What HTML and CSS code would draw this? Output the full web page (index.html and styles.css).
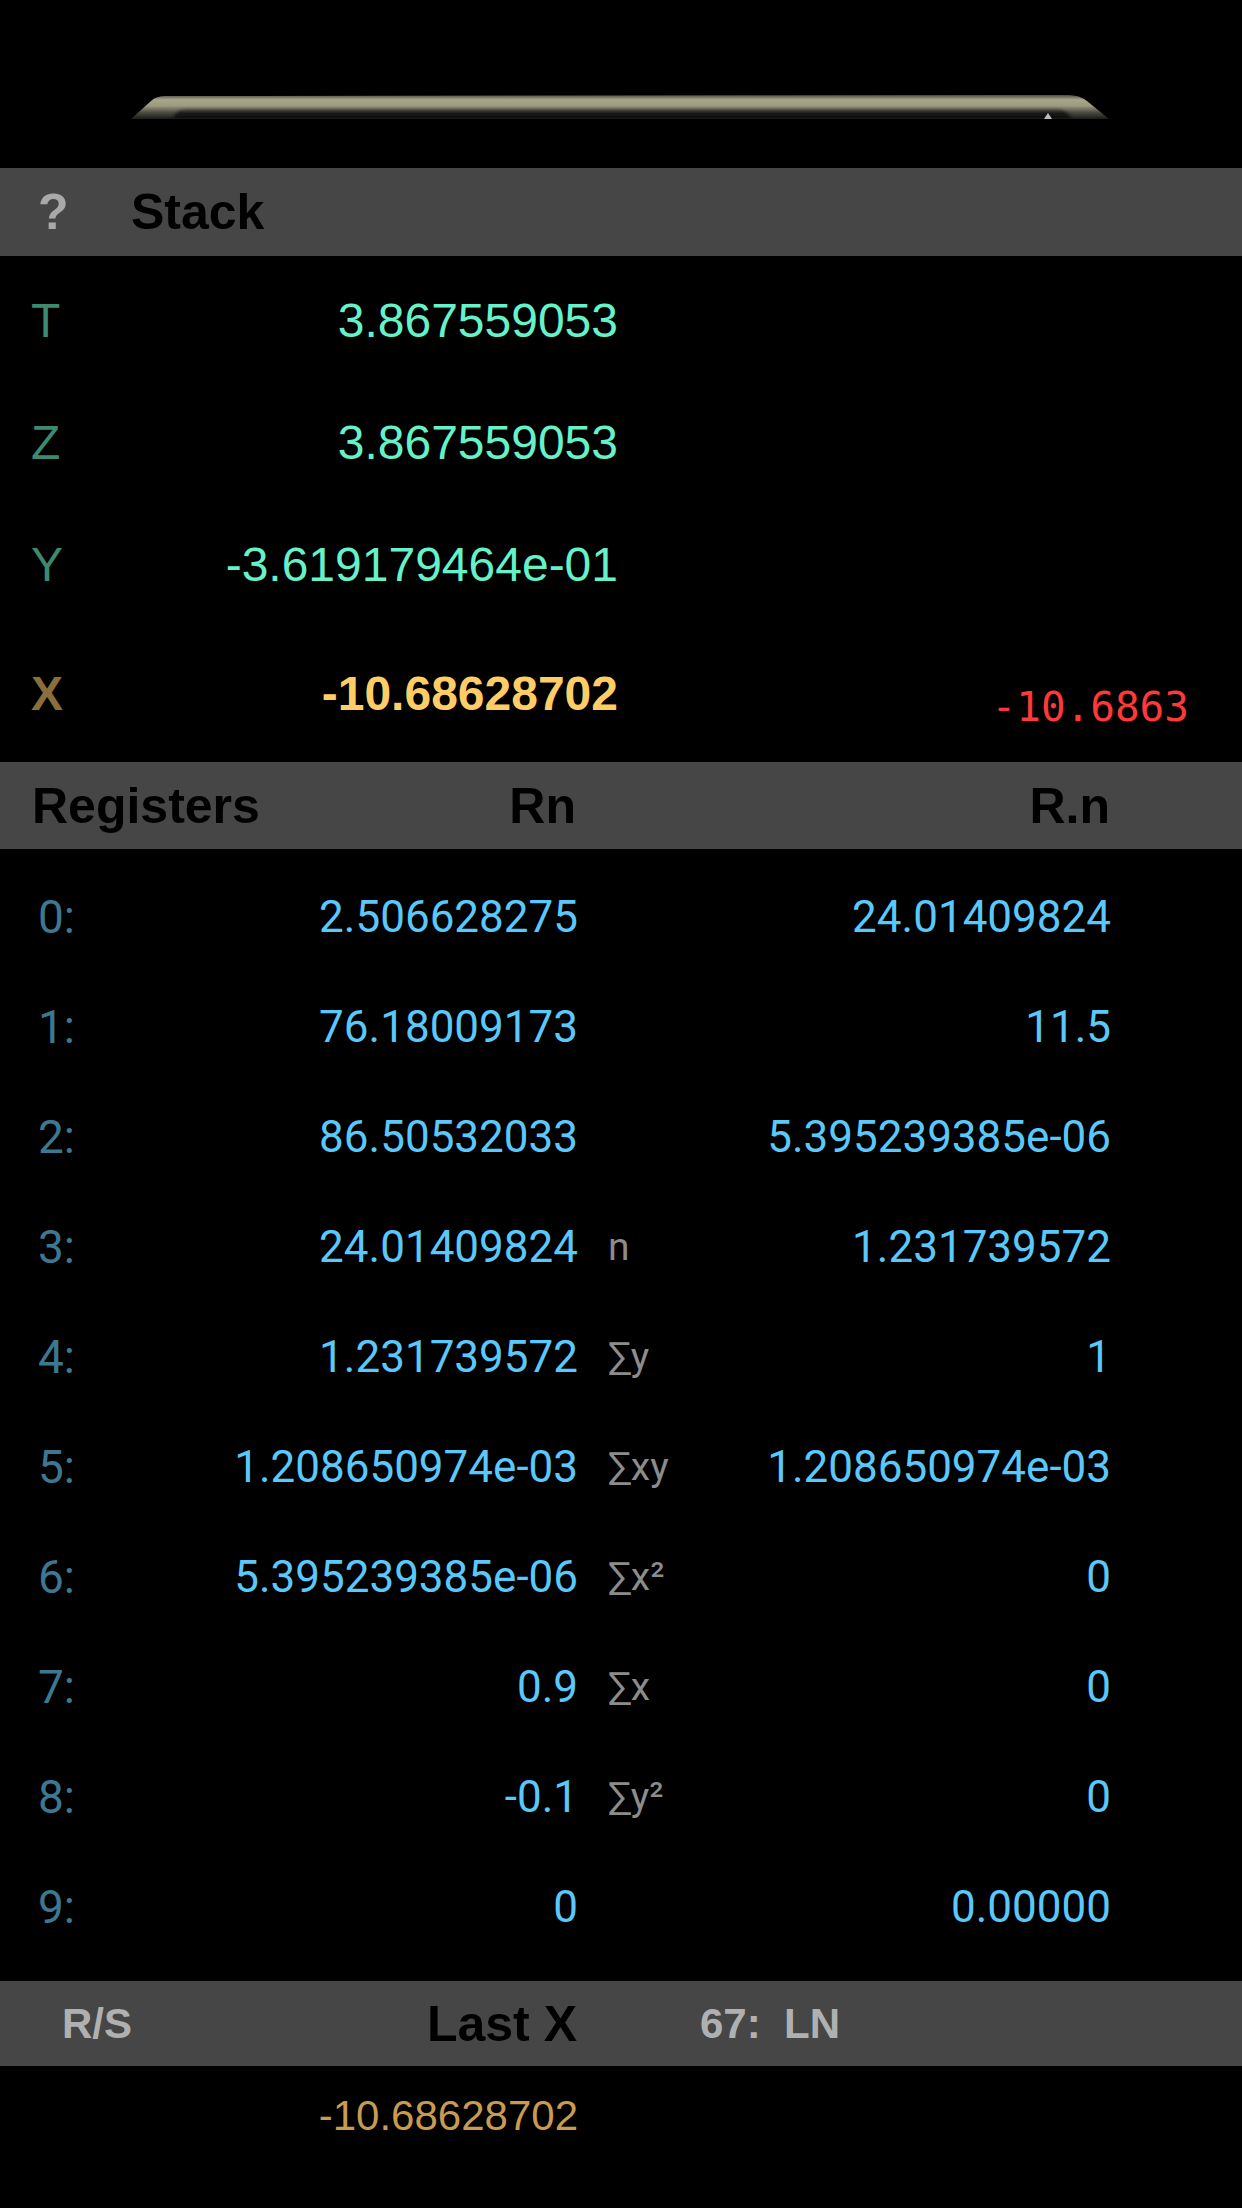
FILE: index.html
```html
<!DOCTYPE html>
<html>
<head>
<meta charset="utf-8">
<link rel="stylesheet" href="styles.css">
</head>
<body>
<div class="top">
  <svg class="bezel" width="1242" height="24" viewBox="0 0 1242 24">
    <defs>
      <linearGradient id="bz" x1="0" y1="0" x2="0" y2="1">
        <stop offset="0" stop-color="#4e4d40"/>
        <stop offset="0.2" stop-color="#a9a78a"/>
        <stop offset="0.45" stop-color="#9c9a7f"/>
        <stop offset="0.72" stop-color="#4e4d43"/>
        <stop offset="1" stop-color="#1a1a18"/>
      </linearGradient>
      <linearGradient id="inner" x1="0" y1="0" x2="0" y2="1">
        <stop offset="0" stop-color="#3a3a33" stop-opacity="0"/>
        <stop offset="0.4" stop-color="#1c1c1a"/>
        <stop offset="1" stop-color="#0a0a0a"/>
      </linearGradient>
      <filter id="bl" x="-0.05" y="-1" width="1.1" height="3"><feGaussianBlur stdDeviation="1.5"/></filter>
    </defs>
    <path d="M131 24 L151 6 Q156 1 166 1 L1068 0 Q1080 0 1087 6 L1109 24 Z" fill="url(#bz)"/>
    <path d="M172 24 Q178 13 192 13 L1050 13 Q1066 13 1072 24 Z" fill="url(#inner)" filter="url(#bl)"/>
    <path d="M1044 24 L1048 18 L1052 24 Z" fill="#bdbdbd"/>
  </svg>
</div>

<div class="bar stack-bar">
  <span class="help">?</span>
  <span class="title">Stack</span>
</div>

<div class="stack">
  <div class="srow">
    <span class="slabel">T</span>
    <span class="sval">3.867559053</span>
    <span class="sextra"></span>
  </div>
  <div class="srow">
    <span class="slabel">Z</span>
    <span class="sval">3.867559053</span>
    <span class="sextra"></span>
  </div>
  <div class="srow">
    <span class="slabel">Y</span>
    <span class="sval">-3.619179464e-01</span>
    <span class="sextra"></span>
  </div>
  <div class="srow xrow">
    <span class="slabel xlabel">X</span>
    <span class="sval xval">-10.68628702</span>
    <span class="sextra lcd">-10.6863</span>
  </div>
</div>

<div class="bar reg-bar">
  <span class="title">Registers</span>
  <span class="title right">Rn</span>
  <span class="title right">R.n</span>
</div>

<div class="regs">
  <div class="rrow"><span class="rlabel">0:</span><span class="rval">2.506628275</span><span class="sig"></span><span class="rval">24.01409824</span></div>
  <div class="rrow"><span class="rlabel">1:</span><span class="rval">76.18009173</span><span class="sig"></span><span class="rval">11.5</span></div>
  <div class="rrow"><span class="rlabel">2:</span><span class="rval">86.50532033</span><span class="sig"></span><span class="rval">5.395239385e-06</span></div>
  <div class="rrow"><span class="rlabel">3:</span><span class="rval">24.01409824</span><span class="sig">n</span><span class="rval">1.231739572</span></div>
  <div class="rrow"><span class="rlabel">4:</span><span class="rval">1.231739572</span><span class="sig">∑y</span><span class="rval">1</span></div>
  <div class="rrow"><span class="rlabel">5:</span><span class="rval">1.208650974e-03</span><span class="sig">∑xy</span><span class="rval">1.208650974e-03</span></div>
  <div class="rrow"><span class="rlabel">6:</span><span class="rval">5.395239385e-06</span><span class="sig">∑x²</span><span class="rval">0</span></div>
  <div class="rrow"><span class="rlabel">7:</span><span class="rval">0.9</span><span class="sig">∑x</span><span class="rval">0</span></div>
  <div class="rrow"><span class="rlabel">8:</span><span class="rval">-0.1</span><span class="sig">∑y²</span><span class="rval">0</span></div>
  <div class="rrow"><span class="rlabel">9:</span><span class="rval">0</span><span class="sig"></span><span class="rval">0.00000</span></div>
</div>

<div class="bar last-bar">
  <span class="gray rs">R/S</span>
  <span class="title right">Last X</span>
  <span class="gray prog">67:&nbsp; LN</span>
</div>

<div class="lastx">
  <span class="lval">-10.68628702</span>
</div>
</body>
</html>
```

FILE: styles.css
```css
html, body {
  margin: 0;
  padding: 0;
  background: #000;
}
body {
  width: 1242px;
  height: 2208px;
  overflow: hidden;
  font-family: "Liberation Sans", Arial, sans-serif;
}
.top {
  height: 168px;
  padding-top: 95px;
  box-sizing: border-box;
}
.bezel {
  display: block;
}
.bar {
  background: #464646;
  display: grid;
  align-items: center;
  box-sizing: border-box;
}
.title {
  font-weight: bold;
  font-size: 50px;
  line-height: 1;
  color: #000;
}
.right {
  text-align: right;
}
.stack-bar {
  height: 88px;
  grid-template-columns: 93px 1fr;
  padding-left: 38px;
}
.help {
  font-weight: bold;
  font-size: 50px;
  line-height: 1;
  color: #a9a9a9;
}
.stack {
  padding-top: 4px;
}
.srow {
  display: grid;
  grid-template-columns: 169px 418px 1fr;
  padding-left: 31px;
  padding-right: 53px;
  height: 122px;
  align-items: center;
  font-size: 48px;
  line-height: 1;
}
.xrow {
  height: 136px;
}
.slabel {
  color: #3c8a70;
}
.sval {
  text-align: right;
  color: #66f2c8;
}
.xlabel {
  color: #8a6f3c;
  font-weight: bold;
}
.xval {
  color: #ffcd66;
  font-weight: bold;
}
.lcd {
  align-self: end;
  text-align: right;
  font-family: "DejaVu Sans Mono", "Liberation Mono", monospace;
  font-size: 41px;
  line-height: 40px;
  margin-bottom: 35px;
  color: #ff3838;
}
.reg-bar {
  height: 87px;
  grid-template-columns: 300px 244px 534px;
  padding-left: 32px;
}
.regs {
  padding-top: 13px;
  height: 1132px;
  box-sizing: border-box;
}
.rrow {
  display: grid;
  grid-template-columns: 120px 420px 152px 381px;
  padding-left: 38px;
  height: 110px;
  align-items: center;
  font-family: Roboto, "Noto Sans", sans-serif;
  font-size: 44px;
  line-height: 1;
}
.rlabel {
  font-size: 46px;
  color: #3c7891;
}
.rval {
  text-align: right;
  color: #5ac8fa;
}
.sig {
  padding-left: 30px;
  font-size: 39px;
  color: #8c8c8c;
}
.last-bar {
  height: 85px;
  grid-template-columns: 200px 315px 1fr;
  padding-left: 62px;
}
.gray {
  font-weight: bold;
  font-size: 42px;
  line-height: 1;
  color: #b0b0b0;
}
.prog {
  padding-left: 123px;
}
.lastx {
  display: grid;
  grid-template-columns: 578px;
  height: 100px;
  align-items: center;
}
.lval {
  text-align: right;
  font-size: 42px;
  line-height: 1;
  color: #c89b50;
}
```
